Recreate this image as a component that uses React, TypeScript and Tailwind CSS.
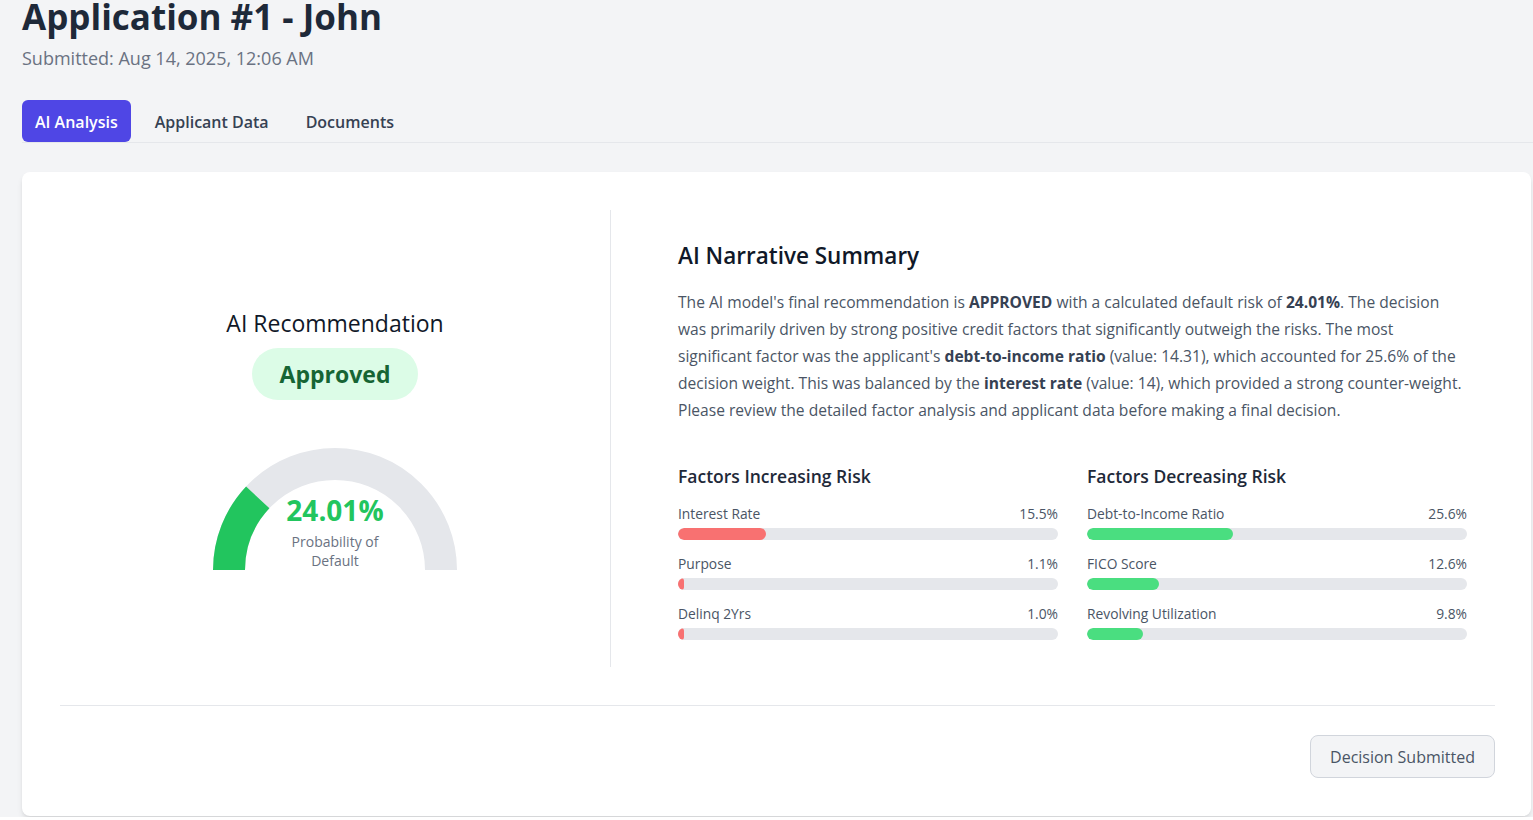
import React from 'react';

const increasing = [
  { label: 'Interest Rate', value: 15.5 },
  { label: 'Purpose', value: 1.1 },
  { label: 'Delinq 2Yrs', value: 1.0 },
];

const decreasing = [
  { label: 'Debt-to-Income Ratio', value: 25.6 },
  { label: 'FICO Score', value: 12.6 },
  { label: 'Revolving Utilization', value: 9.8 },
];

function Gauge({ pct }: { pct: number }) {
  const r = 106;
  const cx = 122;
  const cy = 122;
  const a = (Math.PI * pct) / 100;
  const x = cx - r * Math.cos(a);
  const y = cy - r * Math.sin(a);
  return (
    <div className="relative w-[244px] h-[122px]">
      <svg width="244" height="122" viewBox="0 0 244 122">
        <path d={`M 16 122 A ${r} ${r} 0 0 1 228 122`} fill="none" stroke="#e5e7eb" strokeWidth="32" />
        <path d={`M 16 122 A ${r} ${r} 0 0 1 ${x.toFixed(2)} ${y.toFixed(2)}`} fill="none" stroke="#22c55e" strokeWidth="32" />
      </svg>
      <div className="absolute inset-x-0 bottom-0 flex flex-col items-center">
        <div className="text-[28px] leading-[34px] font-bold text-[#22c55e]">{pct.toFixed(2)}%</div>
        <div className="mt-[5px] w-[110px] text-center text-sm leading-[19px] text-gray-500">Probability of Default</div>
      </div>
    </div>
  );
}

function FactorList({ title, items, color }: { title: string; items: { label: string; value: number }[]; color: string }) {
  return (
    <div>
      <h3 className="text-[17.5px] leading-7 font-semibold text-gray-800">{title}</h3>
      <div className="mt-[14px] flex flex-col gap-[14px]">
        {items.map((f) => (
          <div key={f.label}>
            <div className="flex justify-between text-[13.8px] leading-5 text-gray-600">
              <span>{f.label}</span>
              <span>{f.value.toFixed(1)}%</span>
            </div>
            <div className="mt-1 h-3 w-full rounded-full bg-gray-200 overflow-hidden">
              <div className={`h-3 rounded-full ${color}`} style={{ width: `${f.value * 1.5}%` }} />
            </div>
          </div>
        ))}
      </div>
    </div>
  );
}

export default function App() {
  return (
    <div className="min-h-screen bg-[#f3f4f6] pl-[22px] pr-[2px] text-gray-900" style={{ fontFamily: '"Open Sans", "Noto Sans", sans-serif' }}>
      <h1 className="-mt-[3px] text-[35px] leading-10 font-bold text-gray-800">Application #1 - John</h1>
      <p className="mt-[7px] text-lg leading-7 text-gray-500">Submitted: Aug 14, 2025, 12:06 AM</p>

      <div className="mt-7 -mr-[2px] flex gap-[11px] border-b border-gray-200">
        <button className="h-[42px] px-[13px] pt-[1px] rounded-md bg-[#4f46e5] text-base text-white font-semibold">AI Analysis</button>
        <button className="h-[42px] px-[13px] pt-[1px] rounded-md text-base text-gray-700 font-semibold">Applicant Data</button>
        <button className="h-[42px] px-[13px] pt-[1px] rounded-md text-base text-gray-700 font-semibold">Documents</button>
      </div>

      <div className="mt-[29px] rounded-lg bg-white shadow-md pt-[38px] pb-[38px] pl-[38px] pr-[36px]">
        <div className="flex">
          <div className="w-[551px] shrink-0 border-r border-gray-200 flex flex-col items-center justify-center">
            <h2 className="text-[23px] leading-8 font-medium text-gray-900">AI Recommendation</h2>
            <div className="mt-[9px] rounded-full bg-[#dcfce7] px-7 py-2.5 text-[23px] leading-8 font-bold text-[#166534]">Approved</div>
            <div className="mt-12">
              <Gauge pct={24.01} />
            </div>
          </div>

          <div className="flex-1 pl-[67px] pr-[28px] pt-[30px] pb-[27px]">
            <h2 className="text-[22.5px] leading-8 font-semibold text-gray-900">AI Narrative Summary</h2>
            <p className="mt-[17px] text-[15.6px] leading-[27px] text-gray-600">
              The AI model's final recommendation is <strong className="font-bold text-gray-700">APPROVED</strong> with a calculated default risk of{' '}
              <strong className="font-bold text-gray-700">24.01%</strong>. The decision was primarily driven by strong positive credit factors that
              significantly outweigh the risks. The most significant factor was the applicant's{' '}
              <strong className="font-bold text-gray-700">debt-to-income ratio</strong> (value: 14.31), which accounted for 25.6% of the decision
              weight. This was balanced by the <strong className="font-bold text-gray-700">interest rate</strong> (value: 14), which provided a strong
              counter-weight. Please review the detailed factor analysis and applicant data before making a final decision.
            </p>

            <div className="mt-[38px] grid grid-cols-2 gap-x-[29px]">
              <FactorList title="Factors Increasing Risk" items={increasing} color="bg-[#f87171]" />
              <FactorList title="Factors Decreasing Risk" items={decreasing} color="bg-[#4ade80]" />
            </div>
          </div>
        </div>

        <div className="mt-[38px] border-t border-gray-200 pt-[29px] flex justify-end">
          <button className="h-[43px] px-[19px] rounded-lg border border-gray-300 bg-gray-100 text-base font-medium text-gray-600">
            Decision Submitted
          </button>
        </div>
      </div>
    </div>
  );
}
